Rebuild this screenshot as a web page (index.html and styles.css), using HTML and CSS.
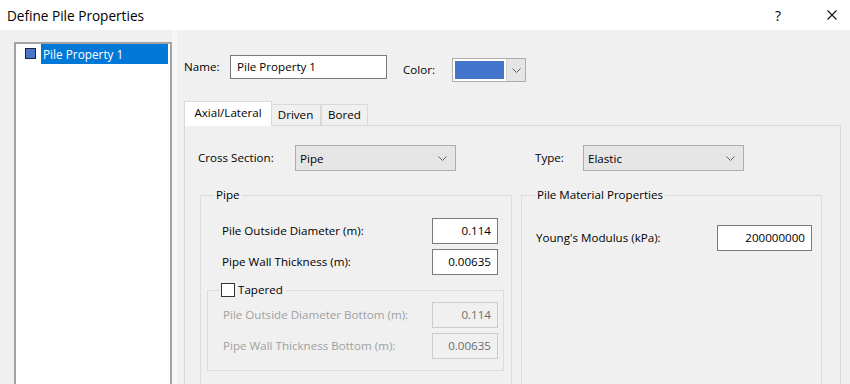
FILE: index.html
```html
<!DOCTYPE html>
<html>
<head>
<meta charset="utf-8">
<link rel="stylesheet" href="styles.css">
</head>
<body>
<div class="window">
  <header class="titlebar">
    <span class="title">Define Pile Properties</span>
    <div class="tb-buttons">
      <span class="help">?</span>
      <span class="close"><svg width="10" height="10" viewBox="0 0 10 10"><path d="M0.5 0.5L9.5 9.5M9.5 0.5L0.5 9.5" stroke="#111" stroke-width="1.1" fill="none"/></svg></span>
    </div>
  </header>
  <div class="body">
    <aside class="sidebar">
      <div class="listbox">
        <div class="list-item">
          <span class="swatch"></span>
          <span class="item-label">Pile Property 1</span>
        </div>
      </div>
    </aside>
    <div class="splitter"></div>
    <main class="content">
      <div class="name-row">
        <span class="lbl name-lbl">Name:</span>
        <div class="textbox name-input">Pile Property 1</div>
        <span class="lbl color-lbl">Color:</span>
        <div class="color-combo">
          <span class="color-wrap"><span class="color-fill"></span></span>
          <span class="combo-btn"><svg width="9" height="5" viewBox="0 0 9 5"><path d="M0.5 0.5L4.5 4.5L8.5 0.5" stroke="#606060" stroke-width="1" fill="none"/></svg></span>
        </div>
      </div>
      <div class="tabs">
        <div class="tab active tab-axial">Axial/Lateral</div>
        <div class="tab tab-driven">Driven</div>
        <div class="tab tab-bored">Bored</div>
      </div>
      <div class="tab-panel">
        <div class="top-row">
          <span class="lbl cs-lbl">Cross Section:</span>
          <div class="combo cs-combo"><span>Pipe</span><svg width="9" height="5" viewBox="0 0 9 5"><path d="M0.5 0.5L4.5 4.5L8.5 0.5" stroke="#606060" stroke-width="1" fill="none"/></svg></div>
          <span class="lbl type-lbl">Type:</span>
          <div class="combo type-combo"><span>Elastic</span><svg width="9" height="5" viewBox="0 0 9 5"><path d="M0.5 0.5L4.5 4.5L8.5 0.5" stroke="#606060" stroke-width="1" fill="none"/></svg></div>
        </div>
        <div class="groups">
          <fieldset class="group pipe-group">
            <legend class="legend pipe-legend">Pipe</legend>
            <div class="field-row first">
              <span class="lbl">Pile Outside Diameter (m):</span>
              <div class="textbox num">0.114</div>
            </div>
            <div class="field-row">
              <span class="lbl">Pipe Wall Thickness (m):</span>
              <div class="textbox num">0.00635</div>
            </div>
            <fieldset class="group tapered-group">
              <legend class="legend tapered-legend"><span class="checkbox"></span><span>Tapered</span></legend>
              <div class="field-row sub first">
                <span class="lbl disabled">Pile Outside Diameter Bottom (m):</span>
                <div class="textbox num disabled-box">0.114</div>
              </div>
              <div class="field-row sub">
                <span class="lbl disabled">Pipe Wall Thickness Bottom (m):</span>
                <div class="textbox num disabled-box">0.00635</div>
              </div>
            </fieldset>
          </fieldset>
          <fieldset class="group material-group">
            <legend class="legend material-legend">Pile Material Properties</legend>
            <div class="field-row mat-row">
              <span class="lbl">Young's Modulus (kPa):</span>
              <div class="textbox num modulus">200000000</div>
            </div>
          </fieldset>
        </div>
      </div>
    </main>
  </div>
</div>
</body>
</html>
```
FILE: styles.css
```css
* { box-sizing: border-box; }

body {
  margin: 0;
  width: 850px;
  height: 384px;
  overflow: hidden;
  font-family: "Open Sans", "Noto Sans", sans-serif;
  font-size: 11.6px;
  color: #000;
  background: #f0f0f0;
}

.window { width: 850px; height: 384px; overflow: hidden; }

.titlebar {
  height: 30px;
  background: #fff;
  display: flex;
  align-items: center;
  justify-content: space-between;
}
.title { padding-left: 7px; font-size: 13.6px; }
.tb-buttons { display: flex; align-items: center; }
.help { font-size: 14px; margin-right: 46px; }
.close { display: flex; margin-right: 13px; }

.body { display: flex; height: 354px; }

.sidebar { width: 172px; flex: none; padding: 12px 0 0 14px; }
.listbox {
  width: 158px;
  height: 400px;
  background: #fff;
  border: 2px solid #a3a3a3;
}
.list-item { display: flex; align-items: flex-start; padding-left: 9px; }
.swatch {
  width: 11px; height: 11px; margin-top: 4px; flex: none;
  background: #4a74c6;
  border: 1px solid #1d2440;
}
.item-label {
  margin-left: 5px;
  margin-right: 2px;
  flex: 1;
  height: 20px;
  line-height: 20px;
  padding-left: 2px;
  background: #0078d7;
  color: #fff;
  font-size: 11.8px;
}

.splitter { width: 12px; flex: none; border-left: 5px solid #f6f6f6; }

.content { flex: 1; display: flex; flex-direction: column; }

.lbl { line-height: 26px; white-space: nowrap; }

.name-row { display: flex; align-items: flex-start; margin-top: 25px; }
.name-lbl { width: 46px; line-height: 24px; }
.textbox {
  background: #fff;
  border: 1px solid #7a7a7a;
  height: 26px;
  line-height: 24px;
  padding: 0 6px;
  white-space: nowrap;
}
.name-input { width: 157px; height: 24px; line-height: 22px; }
.color-lbl { margin-left: 16px; width: 49px; line-height: 24px; margin-top: 3px; }
.color-combo {
  margin-top: 3px;
  width: 74px;
  height: 24px;
  display: flex;
  border: 1px solid #adadad;
  background: #fff;
}
.color-wrap { width: 53px; padding: 2px; display: flex; }
.color-fill { flex: 1; background: #4274cc; }
.combo-btn {
  flex: 1;
  background: #e5e5e5;
  border-left: 1px solid #d4d4d4;
  display: flex;
  align-items: center;
  justify-content: center;
}

.tabs { display: flex; align-items: flex-end; height: 24px; margin-top: 19px; }
.tab {
  height: 21px;
  line-height: 20px;
  text-align: center;
  border: 1px solid #d9d9d9;
  border-bottom: none;
  background: #f0f0f0;
}
.tab.active {
  height: 25px;
  line-height: 22px;
  background: #fff;
  margin-bottom: -1px;
  position: relative;
  z-index: 1;
}
.tab-axial { width: 88px; }
.tab-driven { width: 50px; margin-left: -1px; border-left: none; }
.tab-bored { width: 47px; margin-left: 0; border-left: 1px solid #d9d9d9; }

.tab-panel {
  width: 657px;
  height: 300px;
  border: 1px solid #d9d9d9;
  background: #f0f0f0;
  padding: 19px 0 0 13px;
}

.top-row { display: flex; align-items: center; height: 26px; }
.cs-lbl { width: 97px; }
.combo {
  width: 161px;
  height: 26px;
  background: #e5e5e5;
  border: 1px solid #adadad;
  display: flex;
  align-items: center;
  justify-content: space-between;
  padding: 0 8px 0 4px;
}
.type-lbl { margin-left: 79px; width: 48px; }

.groups { display: flex; margin-left: 2px; margin-top: 16px; gap: 9px; align-items: flex-start; }

.group {
  margin: 0;
  border: 1px solid #dcdcdc;
  min-width: 0;
}
.legend { padding: 0 2px; line-height: 16px; white-space: nowrap; }

.pipe-group { width: 312px; height: 240px; padding: 0 7px 0 6px; }
.pipe-legend { margin-left: 7px; }
.field-row { display: flex; justify-content: space-between; align-items: center; margin: 5px 6px 0 15px; }
.field-row.first { margin-top: 15px; }
.num { width: 66px; text-align: right; }

.tapered-group { margin-top: 7px; padding: 0 5px 11px 0; }
.tapered-legend { margin-left: 12px; display: flex; align-items: center; padding: 0 3px 0 1px; }
.checkbox {
  width: 14px; height: 14px;
  border: 1px solid #333;
  background: #fff;
  margin-right: 3px;
}
.field-row.sub { margin: 5px 0 0 15px; }
.field-row.sub.first { margin-top: 4px; }
.disabled { color: #a0a0a0; }
.disabled-box { background: #f0f0f0; border-color: #cccccc; color: #6d6d6d; }

.material-group { width: 301px; height: 240px; padding: 0 9px 0 13px; }
.material-legend { margin-left: 0; }
.mat-row { margin: 22px 0 0 1px; }
.modulus { width: 95px; }
```
